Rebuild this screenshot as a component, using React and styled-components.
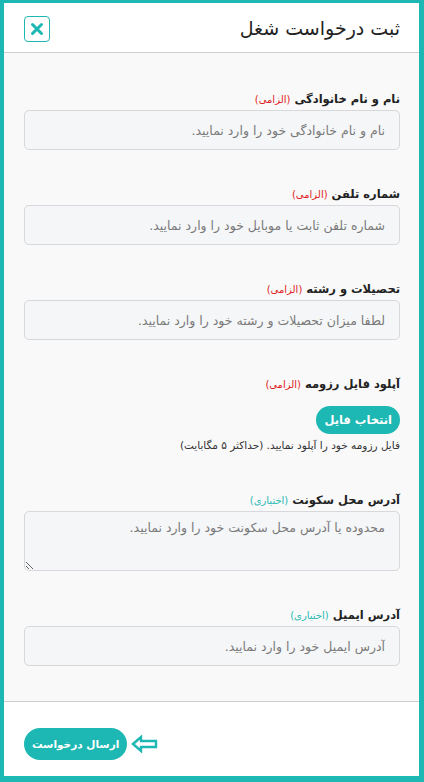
import React from 'react';
import styled, { createGlobalStyle } from 'styled-components';

const GlobalStyle = createGlobalStyle`
  html, body {
    margin: 0;
    padding: 0;
    background: #ffffff;
  }
  * {
    box-sizing: border-box;
  }
  body {
    font-family: "DejaVu Sans", "Noto Sans", sans-serif;
  }
`;

const TEAL = '#1db8b3';

const fields = [
  { label: 'نام و نام خانوادگی', required: true, placeholder: 'نام و نام خانوادگی خود را وارد نمایید.' },
  { label: 'شماره تلفن', required: true, placeholder: 'شماره تلفن ثابت یا موبایل خود را وارد نمایید.' },
  { label: 'تحصیلات و رشته', required: true, placeholder: 'لطفا میزان تحصیلات و رشته خود را وارد نمایید.' },
];

export default function App() {
  return (
    <>
      <GlobalStyle />
      <Modal dir="rtl">
        <Header>
          <Title>ثبت درخواست شغل</Title>
          <CloseButton aria-label="بستن">
            <svg width="14" height="14" viewBox="0 0 14 14">
              <path d="M2.5 2.5 L11.5 11.5 M11.5 2.5 L2.5 11.5" stroke={TEAL} strokeWidth="3" strokeLinecap="round" />
            </svg>
          </CloseButton>
        </Header>

        <Body>
          {fields.map((f) => (
            <Group key={f.label}>
              <Label>
                {f.label} <Tag required={f.required}>{f.required ? '(الزامی)' : '(اختیاری)'}</Tag>
              </Label>
              <Input placeholder={f.placeholder} />
            </Group>
          ))}

          <Group gap={40}>
            <Label>
              آپلود فایل رزومه <Tag required>(الزامی)</Tag>
            </Label>
            <FileButton>انتخاب فایل</FileButton>
            <Hint>فایل رزومه خود را آپلود نمایید. (حداکثر ۵ مگابایت)</Hint>
          </Group>

          <Group gap={36}>
            <Label>
              آدرس محل سکونت <Tag>(اختیاری)</Tag>
            </Label>
            <TextArea placeholder="محدوده یا آدرس محل سکونت خود را وارد نمایید." />
          </Group>

          <Group gap={0}>
            <Label>
              آدرس ایمیل <Tag>(اختیاری)</Tag>
            </Label>
            <Input placeholder="آدرس ایمیل خود را وارد نمایید." />
          </Group>
        </Body>

        <Footer>
          <SubmitButton>ارسال درخواست</SubmitButton>
          <svg width="27" height="18" viewBox="0 0 27 18">
            <path
              d="M2 9 L10 2 L10 6 L25 6 L25 12 L10 12 L10 16 Z"
              fill="none"
              stroke={TEAL}
              strokeWidth="2.4"
              strokeLinejoin="miter"
            />
          </svg>
        </Footer>
      </Modal>
    </>
  );
}

const Modal = styled.div`
  width: 424px;
  height: 782px;
  display: flex;
  flex-direction: column;
  border-style: solid;
  border-color: ${TEAL};
  border-width: 3px 5px 6px 4px;
  background: #ffffff;
`;

const Header = styled.div`
  height: 50px;
  flex-shrink: 0;
  display: flex;
  align-items: center;
  justify-content: space-between;
  padding: 0 19px 0 20px;
  border-bottom: 1px solid #cfcfcf;
  background: #ffffff;
`;

const Title = styled.h1`
  margin: 0;
  font-size: 19px;
  font-weight: 500;
  color: #222;
`;

const CloseButton = styled.button`
  width: 26px;
  height: 26px;
  padding: 0;
  display: flex;
  align-items: center;
  justify-content: center;
  background: #fff;
  border: 1px solid ${TEAL};
  border-radius: 4px;
  margin-top: 3px;
`;

const Body = styled.div`
  flex: 1;
  background: #f9f9f9;
  padding: 38px 19px 0 20px;
  display: flex;
  flex-direction: column;
`;

const Group = styled.div`
  display: flex;
  flex-direction: column;
  align-items: flex-start;
  margin-bottom: ${(p) => (p.gap !== undefined ? p.gap : 36)}px;
`;

const Label = styled.label`
  font-size: 11.5px;
  font-weight: 700;
  line-height: 16px;
  color: #222;
  margin-bottom: 2px;
`;

const Tag = styled.span`
  font-size: 10px;
  font-weight: 400;
  color: ${(p) => (p.required ? '#e01b24' : TEAL)};
`;

const fieldStyles = `
  width: 100%;
  border: 1px solid #d6d8dc;
  border-radius: 5px;
  background: #f5f6f8;
  font-family: "DejaVu Sans", "Noto Sans", sans-serif;
  font-size: 12.5px;
  color: #333;
  padding: 0 14px;
  outline: none;
  &::placeholder {
    color: #7a7a7a;
  }
`;

const Input = styled.input`
  ${fieldStyles}
  height: 40px;
`;

const TextArea = styled.textarea`
  ${fieldStyles}
  height: 60px;
  padding-top: 8px;
  resize: vertical;
`;

const FileButton = styled.button`
  margin-top: 11px;
  height: 28px;
  padding: 0 8px;
  border: none;
  border-radius: 14px;
  background: ${TEAL};
  color: #fff;
  font-family: "DejaVu Sans", "Noto Sans", sans-serif;
  font-size: 11.5px;
  font-weight: 700;
`;

const Hint = styled.p`
  margin: 4px 0 0;
  font-size: 10.5px;
  line-height: 14px;
  color: #333;
`;

const Footer = styled.div`
  height: 75px;
  flex-shrink: 0;
  border-top: 1px solid #cfcfcf;
  background: #ffffff;
  display: flex;
  flex-direction: row;
  justify-content: flex-start;
  align-items: flex-start;
  gap: 4px;
  padding: 26px 20px 0;
  direction: ltr;
  svg {
    margin-top: 7px;
  }
`;

const SubmitButton = styled.button`
  direction: rtl;
  height: 32px;
  padding: 0 8px;
  border: none;
  border-radius: 16px;
  background: ${TEAL};
  color: #fff;
  font-family: "DejaVu Sans", "Noto Sans", sans-serif;
  font-size: 10.5px;
  font-weight: 700;
`;
